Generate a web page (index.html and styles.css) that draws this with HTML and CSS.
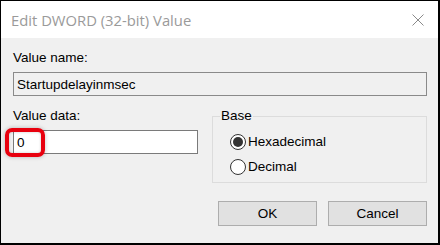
FILE: index.html
```html
<!DOCTYPE html>
<html>
<head>
<meta charset="utf-8">
<link rel="stylesheet" href="styles.css">
</head>
<body>
<div class="window">
  <div class="titlebar">
    <span class="title">Edit DWORD (32-bit) Value</span>
    <svg class="close" width="12" height="12" viewBox="0 0 12 12"><path d="M0.5 0.5 L11.5 11.5 M11.5 0.5 L0.5 11.5" stroke="#8a8a8a" stroke-width="1" fill="none"/></svg>
  </div>
  <div class="content">
    <div class="field">
      <div class="label">Value name:</div>
      <div class="textbox readonly">Startupdelayinmsec</div>
    </div>
    <div class="row">
      <div class="field">
        <div class="label">Value data:</div>
        <div class="textwrap">
          <div class="textbox">0</div>
          <span class="highlight"></span>
        </div>
      </div>
      <fieldset class="group">
        <legend class="legend">Base</legend>
        <div class="radio"><span class="circle checked"></span><span>Hexadecimal</span></div>
        <div class="radio"><span class="circle"></span><span>Decimal</span></div>
      </fieldset>
    </div>
    <div class="buttons">
      <div class="btn">OK</div>
      <div class="btn">Cancel</div>
    </div>
  </div>
</div>
</body>
</html>
```
FILE: styles.css
```css
html, body {
  margin: 0;
  padding: 0;
  background: #f0f0f0;
}
.window {
  box-sizing: border-box;
  width: 440px;
  height: 245px;
  border-style: solid;
  border-color: #000;
  border-width: 1px 2px 2px 1px;
  background: #f0f0f0;
  display: flex;
  flex-direction: column;
  font-family: "Liberation Sans", Arial, sans-serif;
  font-size: 13.5px;
  color: #000;
}
.titlebar {
  height: 37px;
  background: #fff;
  display: flex;
  align-items: center;
  justify-content: space-between;
  padding: 0 14px 0 10px;
  flex: none;
}
.title {
  font-family: "Open Sans", "Noto Sans", sans-serif;
  font-size: 14.8px;
  color: #9a9a9a;
  line-height: 20px;
}
.close {
  display: block;
}
.content {
  flex: 1;
  padding: 12px 11px 0 12px;
}
.label {
  line-height: 16px;
  height: 16px;
}
.textwrap {
  position: relative;
  padding-top: 6px;
}
.textbox {
  box-sizing: border-box;
  margin-top: 6px;
  height: 24px;
  border: 1px solid #7a7a7a;
  background: #fff;
  padding-left: 3px;
  display: flex;
  align-items: center;
}
.textwrap .textbox {
  margin-top: 0;
}
.textbox.readonly {
  background: #f0f0f0;
  border-color: #8a8a8a;
}
.row {
  margin-top: 12px;
  display: grid;
  grid-template-columns: 185px 1fr;
  column-gap: 14px;
  align-items: start;
}
.highlight {
  position: absolute;
  left: -8px;
  top: 4px;
  width: 40px;
  height: 29px;
  box-sizing: border-box;
  border: 4px solid #e8000e;
  border-radius: 7px;
  box-shadow: 0 0 4px rgba(0,0,0,0.25), inset 0 0 3px rgba(0,0,0,0.2);
}
.group {
  margin: 0;
  min-width: 0;
  border: 1px solid #dcdcdc;
  padding: 5px 7px 3px 7px;
}
.legend {
  padding: 0 1px;
  line-height: 16px;
}
.radio {
  height: 25px;
  display: flex;
  align-items: center;
  padding-left: 10px;
  gap: 2px;
}
.circle {
  box-sizing: border-box;
  width: 16px;
  height: 16px;
  border-radius: 50%;
  border: 1px solid #333;
  background: #fff;
  display: flex;
  align-items: center;
  justify-content: center;
}
.circle.checked::after {
  content: "";
  width: 10px;
  height: 10px;
  border-radius: 50%;
  background: #333;
}
.buttons {
  margin-top: 18px;
  display: flex;
  justify-content: flex-end;
  gap: 11px;
}
.btn {
  box-sizing: border-box;
  width: 99px;
  height: 25px;
  border: 1px solid #adadad;
  background: #e1e1e1;
  display: flex;
  align-items: center;
  justify-content: center;
}
```
